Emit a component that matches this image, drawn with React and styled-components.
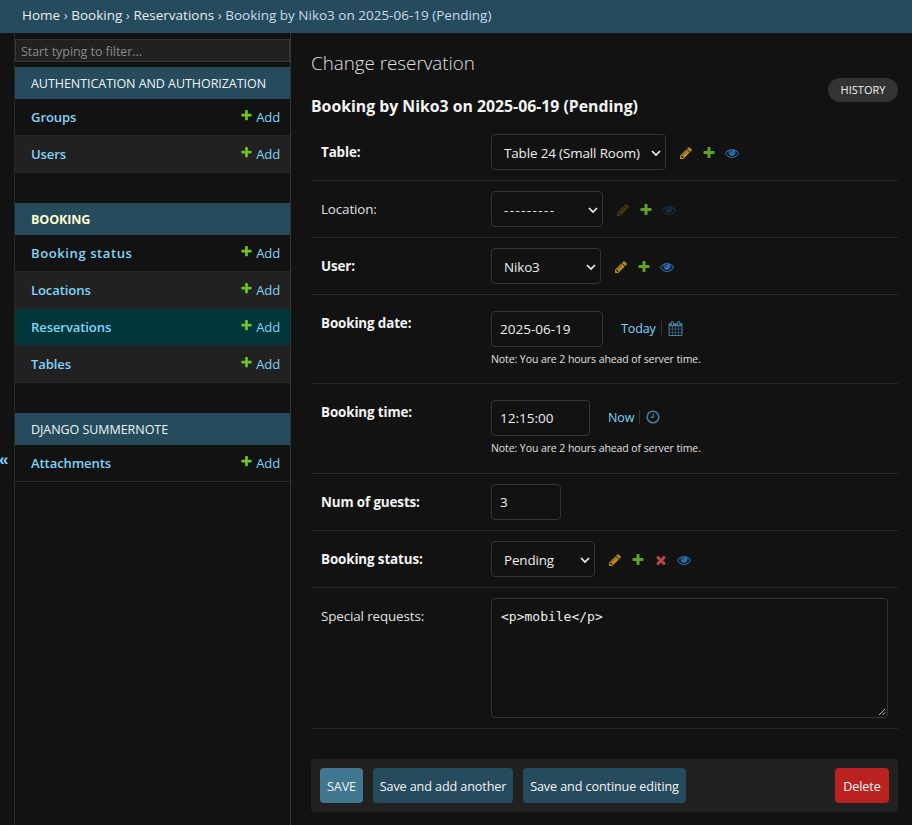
import React from "react";
import styled, { createGlobalStyle } from "styled-components";

const FONT = `"Open Sans", "Noto Sans", Arial, sans-serif`;

const Global = createGlobalStyle`
  html, body { margin: 0; padding: 0; background: #121212; height: 825px; overflow: hidden; }
  * { box-sizing: border-box; }
  body { font-family: ${FONT}; color: #eeeeee; font-size: 14px; }
`;

const Page = styled.div`
  display: flex;
  flex-direction: column;
  height: 825px;
  width: 912px;
  overflow: hidden;
`;
const Breadcrumbs = styled.div`
  height: 33px;
  flex: none;
  background: #264b5d;
  color: #c4dce8;
  padding: 0 0 3px 22px;
  display: flex;
  align-items: center;
  font-size: 13.5px;
  white-space: pre;
`;
const Crumb = styled.span`
  color: ${(p) => (p.$current ? "#c4dce8" : "#e3edf2")};
`;
const Body = styled.div`
  flex: 1;
  display: flex;
  min-height: 0;
`;
const Toggle = styled.div`
  width: 15px;
  flex: none;
  border-right: 1px solid #272727;
  color: #81d4fa;
  font-size: 17px;
  font-weight: 700;
  line-height: 20px;
  padding-top: 417px;
  text-indent: -1px;
  font-family: "Liberation Sans", sans-serif;
`;
const Sidebar = styled.aside`
  width: 276px;
  flex: none;
  border-right: 1px solid #353535;
  padding-top: 6px;
`;
const Filter = styled.div`
  height: 23px;
  margin-bottom: 5px;
  background: #212121;
  border: 1px solid #353535;
  color: #8a8a8a;
  font-size: 12.5px;
  padding: 1px 0 0 5px;
  display: flex;
  align-items: center;
  letter-spacing: -0.06px;
`;
const Module = styled.section`
  margin-bottom: 30px;
`;
const Caption = styled.div`
  height: 32px;
  background: #264b5d;
  color: ${(p) => (p.$active ? "#ffffcc" : "#f0f4f6")};
  font-size: 12.5px;
  font-weight: ${(p) => (p.$active ? 700 : 400)};
  padding-left: 16px;
  display: flex;
  align-items: center;
  letter-spacing: ${(p) => (p.$active ? "-0.1px" : "-0.05px")};
`;
const ModelRow = styled.div`
  height: 37px;
  display: flex;
  align-items: center;
  justify-content: space-between;
  padding: 0 10px 0 16px;
  border-bottom: 1px solid #272727;
  background: ${(p) => (p.$active ? "#00363a" : p.$alt ? "#212121" : "transparent")};
`;
const ModelName = styled.span`
  color: #81d4fa;
  font-size: 13.1px;
  font-weight: 600;
  letter-spacing: ${(p) => (p.$wide ? "0.55px" : "-0.12px")};
  padding-bottom: 1px;
`;
const AddLink = styled.span`
  color: #81d4fa;
  font-size: 13px;
  display: flex;
  align-items: center;
  gap: 3px;
  letter-spacing: -0.1px;
  svg {
    margin-top: -3px;
  }
`;
const Main = styled.main`
  flex: 1;
  min-width: 0;
  padding: 14px 14px 0 20px;
`;
const TitleRow = styled.div`
  height: 31px;
  font-size: 18.8px;
  font-weight: 300;
  color: #e0e0e0;
  display: flex;
  align-items: center;
`;
const HeadRow = styled.div`
  height: 46px;
  display: flex;
  align-items: flex-start;
  justify-content: space-between;
`;
const Fieldset = styled.div`
  font-size: 15.8px;
  font-weight: 700;
  padding-top: 17px;
  color: #f4f4f4;
`;
const History = styled.div`
  width: 70px;
  height: 24px;
  border-radius: 15px;
  background: #333333;
  color: #f0f0f0;
  font-size: 11px;
  padding-bottom: 1px;
  display: flex;
  align-items: center;
  justify-content: center;
`;
const Row = styled.div`
  display: flex;
  padding: ${(p) => p.$pad || "10px 10px 10px"};
  border-bottom: 1px solid #272727;
`;
const Label = styled.div`
  width: 170px;
  flex: none;
  height: ${(p) => (p.$top !== undefined ? "auto" : "36px")};
  display: flex;
  align-items: ${(p) => (p.$top !== undefined ? "flex-start" : "center")};
  padding-top: ${(p) => p.$top || 0}px;
  font-size: 13.4px;
  font-weight: ${(p) => (p.$bold ? 700 : 400)};
  color: ${(p) => (p.$bold ? "#f4f4f4" : "#e0e0e0")};
  letter-spacing: -0.12px;
`;
const Field = styled.div`
  display: flex;
  flex-direction: column;
`;
const Line = styled.div`
  display: flex;
  align-items: center;
  height: 36px;
`;
const Box = styled.div`
  height: 36px;
  width: ${(p) => p.$w}px;
  border: 1px solid #353535;
  border-radius: 4px;
  background: #121212;
  color: #eeeeee;
  font-size: ${(p) => (p.$select ? "13.4px" : "13.5px")};
  display: flex;
  align-items: center;
  justify-content: space-between;
  padding: ${(p) => (p.$select ? "1px 4px 0 12px" : "0 8px")};
  white-space: pre;
  letter-spacing: ${(p) => (p.$select ? "-0.12px" : "0")};
`;
const Spaced = styled.span`
  letter-spacing: 1.4px;
`;
const Note = styled.div`
  font-size: 10.5px;
  margin-top: 5px;
  line-height: 14px;
  height: 14px;
  color: #e0e0e0;
  letter-spacing: -0.08px;
`;
const Icons = styled.div`
  display: flex;
  align-items: center;
  gap: 9px;
  margin-left: 13px;
  padding-top: 1px;
`;
const Icon = styled.svg`
  width: ${(p) => p.$size || 14}px;
  height: ${(p) => p.$size || 14}px;
  flex: none;
  display: block;
  opacity: ${(p) => (p.$dim ? 0.3 : 1)};
`;
const Shortcut = styled.div`
  display: flex;
  align-items: center;
  margin-left: 18px;
  color: #81d4fa;
  font-size: 12.5px;
  letter-spacing: -0.1px;
  padding-bottom: 2px;
`;
const Sep = styled.span`
  width: 1px;
  height: 14px;
  background: #353535;
  margin: 0 6px 0 5px;
`;
const Textarea = styled.div`
  width: 397px;
  height: 120px;
  border: 1px solid #353535;
  border-radius: 4px;
  padding: 9px 9px;
  font-family: "DejaVu Sans Mono", "Liberation Mono", monospace;
  font-size: 13px;
  line-height: 18px;
  color: #eeeeee;
  position: relative;
`;
const Grip = styled.svg`
  position: absolute;
  right: 1px;
  bottom: 1px;
  width: 8px;
  height: 8px;
`;
const Submit = styled.div`
  margin-top: 30px;
  height: 53px;
  border-radius: 4px;
  background: #212121;
  display: flex;
  align-items: center;
  gap: 10px;
  padding: 0 9px;
`;
const Button = styled.div`
  height: 35px;
  width: ${(p) => p.$w}px;
  border-radius: 4px;
  background: ${(p) => p.$bg || "#264b5d"};
  color: #f4f4f4;
  font-size: 12.6px;
  padding-top: 1px;
  display: flex;
  align-items: center;
  justify-content: center;
  margin-left: ${(p) => (p.$push ? "auto" : "0")};
  white-space: pre;
  letter-spacing: -0.1px;
`;

const PENCIL = "M491 1536l91-91-235-235-91 91v107h128v128h107zm523-928q0-22-22-22-10 0-17 7l-542 542q-7 7-7 17 0 22 22 22 10 0 17-7l542-542q7-7 7-17zm-54-192l416 416-832 832h-416v-416zm683 96q0 53-37 90l-166 166-416-416 166-165q36-38 90-38 53 0 91 38l235 234q37 39 37 91z";
const PLUS = "M1600 736v192q0 40-28 68t-68 28h-416v416q0 40-28 68t-68 28h-192q-40 0-68-28t-28-68v-416h-416q-40 0-68-28t-28-68v-192q0-40 28-68t68-28h416v-416q0-40 28-68t68-28h192q40 0 68 28t28 68v416h416q40 0 68 28t28 68z";
const CROSS = "M1490 1322q0 40-28 68l-136 136q-28 28-68 28t-68-28l-294-294-294 294q-28 28-68 28t-68-28l-136-136q-28-28-28-68t28-68l294-294-294-294q-28-28-28-68t28-68l136-136q28-28 68-28t68 28l294 294 294-294q28-28 68-28t68 28l136 136q28 28 28 68t-28 68l-294 294 294 294q28 28 28 68z";
const EYE = "M1664 960q-152-236-381-353 61 104 61 225 0 185-131.500 316.500t-316.500 131.500-316.500-131.500-131.500-316.500q0-121 61-225-229 117-381 353 133 205 333.500 326.500t434.500 121.500 434.500-121.500 333.500-326.500zm-720-384q0-20-14-34t-34-14q-125 0-214.500 89.500t-89.500 214.500q0 20 14 34t34 14 34-14 14-34q0-86 61-147t147-61q20 0 34-14t14-34zm848 384q0 34-20 69-140 230-376.500 368.500t-499.500 138.500-499.500-139-376.500-368q-20-35-20-69t20-69q140-229 376.500-368t499.500-139 499.500 139 376.500 368q20 35 20 69z";
const CAL = "M192 1664h288v-288h-288v288zm352 0h320v-288h-320v288zm-352-352h288v-320h-288v320zm352 0h320v-320h-320v320zm-352-384h288v-288h-288v288zm736 736h320v-288h-320v288zm-384-736h320v-288h-320v288zm768 736h288v-288h-288v288zm-384-352h320v-320h-320v320zm-352-864v-288q0-13-9.500-22.500t-22.500-9.500h-64q-13 0-22.500 9.500t-9.500 22.500v288q0 13 9.500 22.500t22.500 9.500h64q13 0 22.500-9.500t9.500-22.500zm736 864h288v-320h-288v320zm-384-384h320v-288h-320v288zm384 0h288v-288h-288v288zm32-480v-288q0-13-9.500-22.500t-22.500-9.500h-64q-13 0-22.500 9.500t-9.500 22.500v288q0 13 9.500 22.500t22.500 9.500h64q13 0 22.500-9.500t9.500-22.500zm384-64v1280q0 52-38 90t-90 38h-1408q-52 0-90-38t-38-90v-1280q0-52 38-90t90-38h128v-96q0-66 47-113t113-47h64q66 0 113 47t47 113v96h384v-96q0-66 47-113t113-47h64q66 0 113 47t47 113v96h128q52 0 90 38t38 90z";

const Glyph = ({ d, fill, size, dim }) => (
  <Icon viewBox="0 0 1792 1792" $size={size} $dim={dim} aria-hidden="true">
    <path d={d} fill={fill} />
  </Icon>
);

const Chevron = () => (
  <Icon viewBox="0 0 10 6" $size={10} aria-hidden="true">
    <path d="M1 1l4 4 4-4" fill="none" stroke="#eeeeee" strokeWidth="1.7" />
  </Icon>
);

const Clock = () => (
  <Icon viewBox="0 0 14 14" $size={14} aria-hidden="true">
    <circle cx="7" cy="7" r="5.8" fill="none" stroke="#447e9b" strokeWidth="1.6" />
    <path d="M7.3 3.500v3.800H4.600" fill="none" stroke="#447e9b" strokeWidth="1.2" />
  </Icon>
);

const RelatedIcons = ({ dim, del }) => (
  <Icons>
    <Glyph d={PENCIL} fill="#b38c1a" dim={dim} />
    <Glyph d={PLUS} fill="#5fa225" />
    {del && <Glyph d={CROSS} fill="#b04a4a" />}
    <Glyph d={EYE} fill="#2a6aa8" dim={dim} />
  </Icons>
);

const Select = ({ w, value, ...rest }) => (
  <Line>
    <Box $w={w} $select>
      {value}
      <Chevron />
    </Box>
    <RelatedIcons {...rest} />
  </Line>
);

const modules = [
  { name: "AUTHENTICATION AND AUTHORIZATION", models: ["Groups", "Users"] },
  { name: "BOOKING", active: true, models: ["Booking status", "Locations", "Reservations", "Tables"], current: "Reservations" },
  { name: "DJANGO SUMMERNOTE", models: ["Attachments"] },
];

export default function App() {
  return (
    <Page>
      <Global />
      <Breadcrumbs>
        <Crumb>Home</Crumb> › <Crumb>Booking</Crumb> › <Crumb>Reservations</Crumb> › <Crumb $current>Booking by Niko3 on 2025-06-19 (Pending)</Crumb>
      </Breadcrumbs>
      <Body>
        <Toggle>«</Toggle>
        <Sidebar>
          <Filter>Start typing to filter...</Filter>
          {modules.map((m) => (
            <Module key={m.name}>
              <Caption $active={m.active}>{m.name}</Caption>
              {m.models.map((name, i) => (
                <ModelRow key={name} $alt={i % 2 === 1} $active={m.current === name}>
                  <ModelName $wide={name === "Booking status"}>{name}</ModelName>
                  <AddLink>
                    <Glyph d={PLUS} fill="#70bf2b" size={13} />
                    Add
                  </AddLink>
                </ModelRow>
              ))}
            </Module>
          ))}
        </Sidebar>
        <Main>
          <TitleRow>Change reservation</TitleRow>
          <HeadRow>
            <Fieldset>Booking by Niko3 on 2025-06-19 (Pending)</Fieldset>
            <History>HISTORY</History>
          </HeadRow>
          <Row>
            <Label $bold>Table:</Label>
            <Select w={175} value="Table 24 (Small Room)" />
          </Row>
          <Row>
            <Label>Location:</Label>
            <Select w={112} value={<Spaced>---------</Spaced>} dim />
          </Row>
          <Row>
            <Label $bold>User:</Label>
            <Select w={110} value="Niko3" />
          </Row>
          <Row $pad="16px 10px 17px">
            <Label $bold $top={3}>Booking date:</Label>
            <Field>
              <Line>
                <Box $w={112}>2025-06-19</Box>
                <Shortcut>
                  Today<Sep />
                  <Glyph d={CAL} fill="#447e9b" size={15} />
                </Shortcut>
              </Line>
              <Note>Note: You are 2 hours ahead of server time.</Note>
            </Field>
          </Row>
          <Row $pad="16px 10px 18px">
            <Label $bold $top={3}>Booking time:</Label>
            <Field>
              <Line>
                <Box $w={99}>12:15:00</Box>
                <Shortcut>
                  Now<Sep />
                  <Clock />
                </Shortcut>
              </Line>
              <Note>Note: You are 2 hours ahead of server time.</Note>
            </Field>
          </Row>
          <Row>
            <Label $bold>Num of guests:</Label>
            <Line>
              <Box $w={70}>3</Box>
            </Line>
          </Row>
          <Row>
            <Label $bold>Booking status:</Label>
            <Select w={104} value="Pending" del />
          </Row>
          <Row>
            <Label $top={9}>Special requests:</Label>
            <Textarea>
              {"<p>mobile</p>"}
              <Grip viewBox="0 0 8 8" aria-hidden="true">
                <path d="M1 7l6-6M4.500 7l2.500-2.500" stroke="#bdbdbd" strokeWidth="1" fill="none" />
              </Grip>
            </Textarea>
          </Row>
          <Submit>
            <Button $w={43} $bg="#417690">SAVE</Button>
            <Button $w={140}>Save and add another</Button>
            <Button $w={163}>Save and continue editing</Button>
            <Button $w={54} $bg="#ba2121" $push>Delete</Button>
          </Submit>
        </Main>
      </Body>
    </Page>
  );
}
